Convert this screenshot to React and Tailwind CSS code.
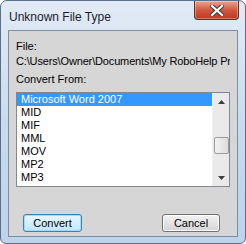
import React from 'react';

const items = ['Microsoft Word 2007', 'MID', 'MIF', 'MML', 'MOV', 'MP2', 'MP3'];

const CloseGlyph = () => (
  <svg width="14" height="11" viewBox="0 0 14 11">
    <path d="M2 1 L12 10 M12 1 L2 10" stroke="#3b3b3b" strokeWidth="4.2" strokeLinecap="square" />
    <path d="M2 1 L12 10 M12 1 L2 10" stroke="#ffffff" strokeWidth="2.2" strokeLinecap="square" />
  </svg>
);

const Arrow = ({ up }) => (
  <svg width="7" height="4" viewBox="0 0 7 4">
    <path d={up ? 'M0 4 L3.5 0 L7 4 Z' : 'M0 0 L3.5 4 L7 0 Z'} fill="#3c3c3c" />
  </svg>
);

const App = () => {
  return (
    <div className="w-[246px] h-[244px] bg-white" style={{ fontFamily: '"Liberation Sans", Arial, sans-serif' }}>
      <div className="relative w-[246px] h-[244px] rounded-t-[7px] rounded-b-[6px] border border-[#5a6f8c] bg-gradient-to-b from-[#e2ebf5] via-[#c9dbee] to-[#bcd3ea] flex flex-col px-[7px] pb-[6px]">
        <div className="h-[29px] flex items-start justify-between">
          <span className="pt-[7px] pl-[1px] text-[12px] text-[#1b1b2e]">Unknown File Type</span>
          <button className="w-[45px] h-[19px] -mr-[1px] rounded-b-[4px] border border-t-0 border-[#6b2a22] bg-gradient-to-b from-[#e8a493] via-[#d0583f] to-[#c0341e] flex items-center justify-center shadow-[inset_0_0_0_1px_rgba(255,255,255,0.35)]">
            <CloseGlyph />
          </button>
        </div>
        <div className="flex-1 border border-[#7c8ea5] bg-[#d6d6d6] flex flex-col px-[7px] pt-[8px] text-[11px] text-black">
          <div className="leading-[14px]">File:</div>
          <div className="leading-[14px] mt-[1px] whitespace-nowrap overflow-hidden tracking-[-0.15px]">C:\Users\Owner\Documents\My RoboHelp Pr</div>
          <div className="leading-[14px] mt-[4px]">Convert From:</div>
          <div className="mt-[6px] h-[95px] border border-[#828790] bg-white flex">
            <div className="flex-1 flex flex-col">
              {items.map((it, i) => (
                <div key={it} className={`h-[13px] leading-[13px] pl-[4px] text-[11px] ${i === 0 ? 'bg-[#3399ff] text-white' : 'text-black'}`}>{it}</div>
              ))}
            </div>
            <div className="w-[17px] bg-[#eaeaea] flex flex-col items-center border-l border-[#f0f0f0]">
              <div className="h-[17px] flex items-center justify-center"><Arrow up /></div>
              <div className="flex-1 w-full flex flex-col pt-[27px] items-center">
                <div className="w-[15px] h-[17px] rounded-[2px] border border-[#9a9a9a] bg-gradient-to-r from-[#f2f2f2] to-[#dcdcdc]" />
              </div>
              <div className="h-[17px] flex items-center justify-center"><Arrow /></div>
            </div>
          </div>
          <div className="flex justify-between mt-[27px] pl-[7px] pr-[10px]">
            <button className="w-[59px] h-[18px] rounded-[3px] border border-[#3c7fb1] bg-gradient-to-b from-[#eaf6fd] to-[#bee6fd] shadow-[inset_0_0_0_1px_#9fdcf9] text-[11px] leading-[16px]">Convert</button>
            <button className="w-[58px] h-[18px] rounded-[3px] border border-[#707070] bg-gradient-to-b from-[#f2f2f2] to-[#d5d5d5] shadow-[inset_0_0_0_1px_#fcfcfc] text-[11px] leading-[16px]">Cancel</button>
          </div>
        </div>
      </div>
    </div>
  );
};

export default App;
